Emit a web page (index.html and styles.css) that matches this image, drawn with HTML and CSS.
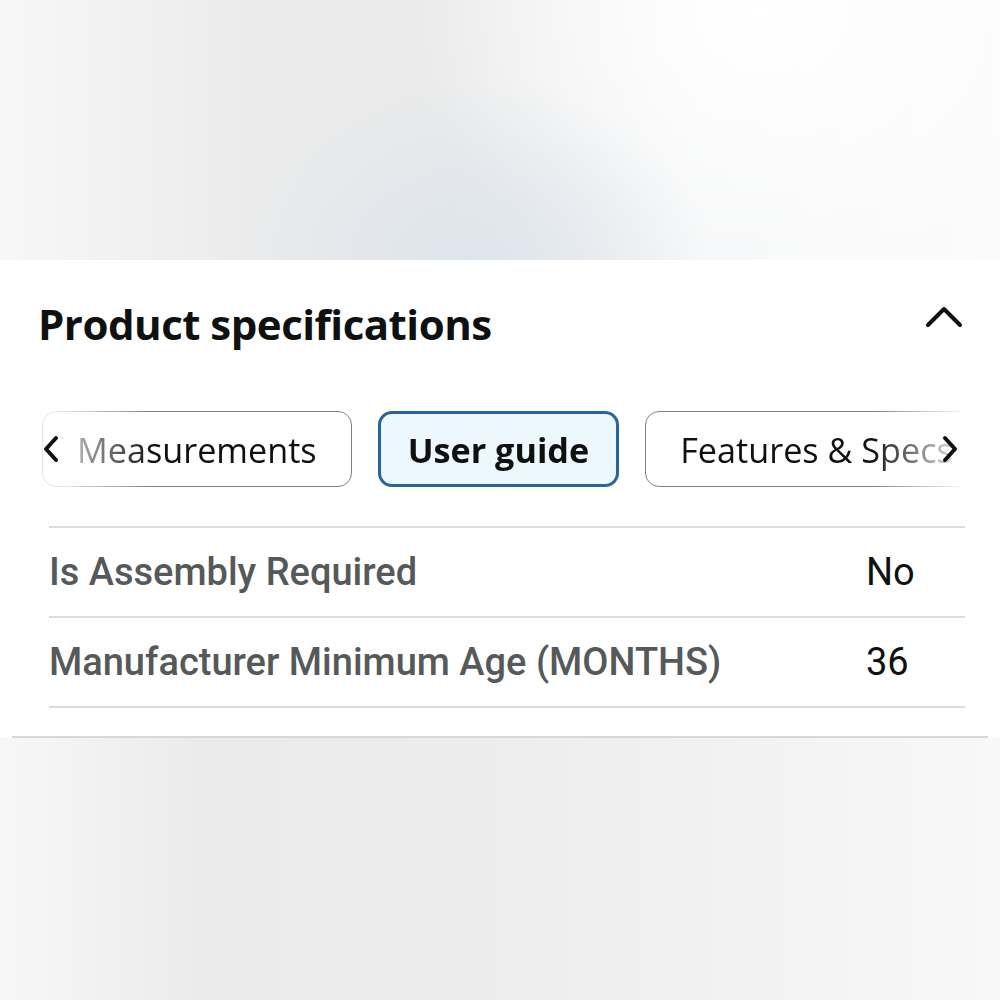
FILE: index.html
```html
<!DOCTYPE html>
<html>
<head>
    <title>Product specifications</title>
    <link rel="stylesheet" href="styles.css">
</head>
<body>
    <div class="backdrop-top"></div>
    <section class="spec-panel">
        <div class="spec-inner">
            <div class="spec-header">
                <h2>Product specifications</h2>
                <svg class="collapse-icon" width="40" height="28" viewBox="0 0 40 28">
                    <polyline points="4,22 20,6 36,22" fill="none" stroke="#0f1111" stroke-width="4" stroke-linecap="round" stroke-linejoin="round"/>
                </svg>
            </div>

            <div class="chip-scroller">
                <div class="chip-track">
                    <button class="chip">Measurements</button>
                    <button class="chip chip-active">User guide</button>
                    <button class="chip">Features &amp; Specs</button>
                </div>
                <svg class="scroll-arrow arrow-left" width="20" height="28" viewBox="0 0 20 28">
                    <polyline points="15,3 5,14 15,25" fill="none" stroke="#0f1111" stroke-width="4" stroke-linecap="round" stroke-linejoin="round"/>
                </svg>
                <svg class="scroll-arrow arrow-right" width="20" height="28" viewBox="0 0 20 28">
                    <polyline points="5,3 15,14 5,25" fill="none" stroke="#0f1111" stroke-width="4" stroke-linecap="round" stroke-linejoin="round"/>
                </svg>
            </div>

            <table class="spec-table">
                <tbody>
                    <tr>
                        <th>Is Assembly Required</th>
                        <td>No</td>
                    </tr>
                    <tr>
                        <th>Manufacturer Minimum Age (MONTHS)</th>
                        <td>36</td>
                    </tr>
                </tbody>
            </table>
        </div>
    </section>
    <div class="backdrop-bottom"></div>
</body>
</html>
```

FILE: styles.css
```css
body {
    margin: 0;
    font-family: "Open Sans", "Noto Sans", Arial, sans-serif;
    color: #0f1111;
    background-color: #ececec;
}
.backdrop-top {
    height: 260px;
    background:
        radial-gradient(ellipse 240px 180px at 47% 100%, rgba(220, 228, 236, 0.9), rgba(220, 228, 236, 0)),
        radial-gradient(ellipse 360px 280px at 76% 5%, #ffffff, rgba(255, 255, 255, 0)),
        linear-gradient(90deg, #f7f7f7 0%, #ebebeb 25%, #eaeaea 45%, #f6f7f8 70%, #fbfbfb 100%);
}
.spec-panel {
    background-color: white;
    padding: 0 12px;
}
.spec-inner {
    height: 476px;
    border-bottom: 2px solid #d5d9d9;
}
.spec-header {
    display: flex;
    justify-content: space-between;
    align-items: center;
    padding: 36px 24px 0 26px;
}
.spec-header h2 {
    margin: 0;
    font-size: 42px;
    font-weight: 700;
    letter-spacing: -0.5px;
    line-height: 56px;
}
.collapse-icon {
    margin-top: -14px;
}
.chip-scroller {
    position: relative;
    margin: 59px 0 0 30px;
    width: 918px;
}
.chip-track {
    display: flex;
    gap: 26px;
    overflow: hidden;
    -webkit-mask-image: linear-gradient(90deg, rgba(0,0,0,0.2) 20px, #000 110px, #000 830px, rgba(0,0,0,0.15) 912px);
    mask-image: linear-gradient(90deg, rgba(0,0,0,0.2) 20px, #000 110px, #000 830px, rgba(0,0,0,0.15) 912px);
}
.chip {
    flex-shrink: 0;
    height: 76px;
    padding: 0 34px;
    font-family: "Open Sans", "Noto Sans", Arial, sans-serif;
    font-size: 34.2px;
    color: #0f1111;
    background-color: white;
    border: 1.5px solid #7d8086;
    border-radius: 14px;
    white-space: nowrap;
}
.chip-active {
    font-weight: 700;
    background-color: #edf7fe;
    border: 3.5px solid #2a64a0;
    padding: 0 27px;
}
.scroll-arrow {
    position: absolute;
    top: 24px;
}
.arrow-left {
    left: -1px;
}
.arrow-right {
    right: 0px;
}
.spec-table {
    width: 916px;
    margin: 39px 0 0 37px;
    border-collapse: collapse;
}
.spec-table tr {
    border-top: 2px solid #dcdcdc;
    border-bottom: 2px solid #dcdcdc;
}
.spec-table th, .spec-table td {
    height: 88px;
    padding: 0;
    text-align: left;
    font-family: Roboto, "Open Sans", Arial, sans-serif;
    font-size: 38px;
}
.spec-table th {
    font-weight: 500;
    color: #565959;
}
.spec-table td {
    width: 99px;
    color: #0f1111;
}
.backdrop-bottom {
    height: 262px;
    background:
        linear-gradient(90deg, #f7f7f7 0%, #ebebeb 20%, #ececec 45%, #f1f1f1 70%, #f8f8f8 100%);
}
```
